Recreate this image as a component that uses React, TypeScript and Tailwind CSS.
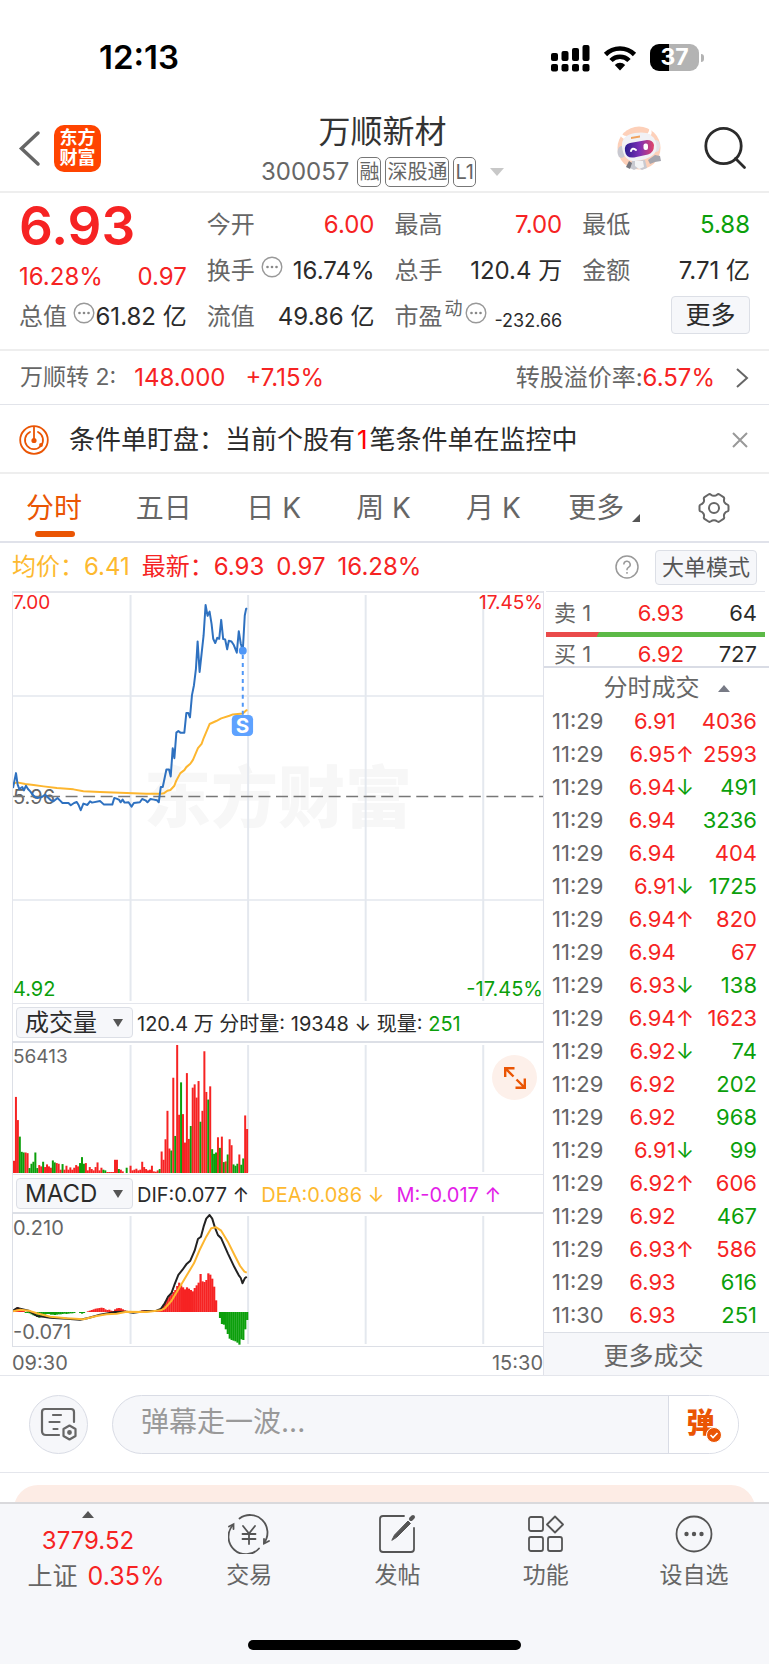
import React from 'react';

const RED = 'text-[#f62323]';
const GREEN = 'text-[#0b9f0b]';

const trades: [string, string, string, string, 'r' | 'g'][] = [
  ['11:29', '6.91', '', '4036', 'r'],
  ['11:29', '6.95', '↑', '2593', 'r'],
  ['11:29', '6.94', '↓', '491', 'g'],
  ['11:29', '6.94', '', '3236', 'g'],
  ['11:29', '6.94', '', '404', 'r'],
  ['11:29', '6.91', '↓', '1725', 'g'],
  ['11:29', '6.94', '↑', '820', 'r'],
  ['11:29', '6.94', '', '67', 'r'],
  ['11:29', '6.93', '↓', '138', 'g'],
  ['11:29', '6.94', '↑', '1623', 'r'],
  ['11:29', '6.92', '↓', '74', 'g'],
  ['11:29', '6.92', '', '202', 'g'],
  ['11:29', '6.92', '', '968', 'g'],
  ['11:29', '6.91', '↓', '99', 'g'],
  ['11:29', '6.92', '↑', '606', 'r'],
  ['11:29', '6.92', '', '467', 'g'],
  ['11:29', '6.93', '↑', '586', 'r'],
  ['11:29', '6.93', '', '616', 'g'],
  ['11:30', '6.93', '', '251', 'g'],
];

// One entry per minute; negative values are drawn green.
const volume = [
  37, 230, 160, -110, -64, -62, 62, 60, -15, -28, -34, -62, -15, 24, 20, -34, 18, 26, 20, 16, -38, -32, 30, 28, 10, -27,
  10, 22, 10, 17, 10, 16, 24, 20, -30, -48, -28, 30, 8, 18, 12, 8, 18, 32, 8, 16, -10, -8, 3, 3, 3, 3, 40, 40, -12, 10,
  5, 0, -16, 0, 22, 8, 10, 13, 8, 10, 34, 18, 12, 8, 10, 22, 5, 4, 8, -12, 65, 40, 102, 188, 74, -68, 288, -112, 387,
  176, -274, 178, 92, 302, 103, -142, 258, 268, 228, 278, -155, 188, 368, 245, -222, 262, -72, -58, -62, 108, -76, 110,
  -33, 35, -56, 102, 84, -26, -22, -28, 56, -25, -44, 174, 133,
];

const macd = [
  6, 10, 14, 8, 5, 4, -3, -3, -4, -7, -10, -12, -15, -17, -15, -10, -8, -6, -6, -8, -8, -9, -8, -7, -7, -6, -5, -6, -5,
  -4, -4, -3, 0, 0, -3, -5, -3, 0, 2, 4, 6, 8, 10, 11, 12, 13, 12, 8, 6, 7, 4, 3, 8, 11, 12, 11, 8, 5, 3, 2, 1, 1, 1, 2,
  2, 3, 5, 5, 4, 3, 3, 3, 3, 3, 4, 5, 12, 22, 32, 42, 48, 52, 60, 66, 78, 88, 80, 74, 68, 74, 70, 66, 62, 72, 80, 88,
  114, 92, 90, 96, 116, 112, 100, 76, 35, 0, -18, -36, -38, -52, -66, -80, -84, -86, -88, -92, -98, -82, -84, -52, -24,
];

const pricePoints =
  '38,625 42,605 47,580 52,615 57,628 66,622 71,632 77,618 83,628 90,635 97,645 105,652 112,655 125,652 135,645 145,655 152,662 160,665 172,655 180,663 187,670 205,670 212,677 222,670 230,667 236,677 242,692 250,672 262,676 270,665 276,669 300,664 312,675 337,675 343,655 350,657 358,661 362,668 368,660 374,669 386,668 395,681 402,670 420,668 427,658 437,662 443,668 452,658 462,660 472,662 477,668 483,622 489,622 500,569 508,569 513,590 519,505 524,535 530,458 536,453 542,458 554,458 560,399 566,399 571,412 577,345 583,315 589,265 594,183 600,275 606,220 612,165 618,73 624,106 630,93 636,130 641,175 647,188 653,172 659,175 665,118 671,176 677,177 683,207 688,181 696,183 703,194 712,217 718,152 724,190 730,211 736,105 740,85 743,83';
const averagePoints =
  '38,612 50,608 75,613 100,616 130,620 170,625 220,629 250,635 300,637 380,640 440,642 483,642 492,641 503,633 512,631 524,618 530,602 542,580 554,571 560,562 572,552 580,540 595,505 606,492 612,475 630,432 650,423 665,415 690,407 700,403 730,400 740,391 744,390';
const difPoints =
  '38,992 50,984 85,992 110,1008 130,1010 150,1013 200,1016 240,1019 265,1014 300,1004 345,996 380,995 400,998 435,994 470,992 483,987 495,970 505,950 515,940 524,915 536,885 548,870 560,853 572,842 585,812 595,777 604,770 612,740 620,716 630,705 638,716 646,742 655,765 665,775 685,820 705,862 718,886 724,894 729,910 736,895 742,890';
const deaPoints =
  '38,994 60,989 85,992 110,1000 150,1010 200,1015 250,1018 290,1008 320,1003 350,1001 380,995 440,996 483,991 495,985 515,963 530,938 560,888 583,850 600,810 620,770 635,745 650,742 665,752 685,785 705,825 722,858 735,875 742,878';

function VerticalGrid({ height }: { height: number }) {
  return (
    <g stroke="#e4e8ee" strokeWidth="2">
      {[118, 236, 354, 472].map((x) => (
        <line key={x} x1={x} x2={x} y1="2" y2={height - 2} />
      ))}
    </g>
  );
}

function Dots() {
  return (
    <svg viewBox="0 0 22 22" className="size-[22px] shrink-0" fill="none">
      <circle cx="11" cy="11" r="9.8" stroke="#999" strokeWidth="1.4" />
      <g fill="#888">
        <circle cx="6.5" cy="11" r="1.3" />
        <circle cx="11" cy="11" r="1.3" />
        <circle cx="15.5" cy="11" r="1.3" />
      </g>
    </svg>
  );
}

function Stat({ label, extra, value, tone = 'text-[#2b2b2b]' }: { label: string; extra?: React.ReactNode; value: string; tone?: string }) {
  return (
    <div className="flex h-[46px] items-center justify-between whitespace-nowrap">
      <dt className="flex items-center gap-1.5 text-[#666]">
        {label}
        {extra}
      </dt>
      <dd className={tone}>{value}</dd>
    </div>
  );
}

function StatusBar() {
  return (
    <div className="flex h-[105px] items-center justify-between pt-[10px] pr-[65px] pl-[99px]">
      <span className="text-[33px] font-semibold text-black">12:13</span>
      <div className="flex items-center gap-[13px]">
        <svg viewBox="0 0 40 28" className="h-7 w-10" fill="#000">
          <rect x="1" y="9" width="7" height="8" rx="2" />
          <rect x="11.500" y="7" width="7" height="10" rx="2" />
          <rect x="22" y="4" width="7" height="13" rx="2" />
          <rect x="32.500" y="1" width="7" height="16" rx="2" />
          <rect x="1" y="20" width="7" height="7.500" rx="2" />
          <rect x="11.500" y="20" width="7" height="7.500" rx="2" />
          <rect x="22" y="20" width="7" height="7.500" rx="2" />
          <rect x="32.500" y="20" width="7" height="7.500" rx="2" />
        </svg>
        <svg viewBox="0 0 34 26" className="h-[26px] w-[34px]" fill="none" stroke="#000" strokeWidth="4.600">
          <path d="M2.500 9.500a20.500 20.500 0 0 1 29 0" />
          <path d="M8 15.500a12.600 12.600 0 0 1 18 0" />
          <path d="M17 25.500l-5.200-5.600a7.500 7.500 0 0 1 10.400 0z" fill="#000" stroke="none" />
        </svg>
        <div className="flex items-center gap-0.5">
          <span className="flex h-[27px] w-[49px] items-center justify-center rounded-[9px] bg-linear-to-r from-black from-38% to-[#b3b3b3] to-38% text-[23px] font-bold text-white">
            37
          </span>
          <span className="h-2 w-[3px] rounded-r bg-[#b3b3b3]" />
        </div>
      </div>
    </div>
  );
}

function Robot() {
  return (
    <svg viewBox="0 0 45 45" className="size-[45px]">
      <circle cx="22" cy="22" r="21.500" fill="#fdd0b9" />
      <path d="M15 35l-2 7 4 2 4-2 4 2 5-2-2-8z" fill="#c9c9d0" />
      <path d="M18 35h8l1 6-5 2-4-3z" fill="#f3f3f5" />
      <path d="M31 34l7-5 5 1 1 5-6 1-5 2z" fill="#a5a5ad" />
      <path d="M12 35l-3 6 4 2 2-6z" fill="#77777f" />
      <path d="M3 5q-1 5 4 8l3-3q-5 0-7-5z" fill="#fff" />
      <path d="M32 1q4 3 2 8l-4-1q3-3 2-7z" fill="#fff" />
      <ellipse cx="4.500" cy="26" rx="4" ry="6" fill="#c8c8d0" />
      <ellipse cx="39" cy="20" rx="4" ry="6" fill="#e2e2e8" />
      <path d="M5 21Q4 9 18 7q17-3 21 9 2 9-3 13-6 5-18 6Q7 36 5 21z" fill="#f1f1f5" />
      <path d="M14 11l9-1.500v2L14 13z" fill="#f0a25e" />
      <path d="M8 25q-1-7 5-8l17-3q6 0 7 5 0 8-6 9.500l-14 3q-8 1-9-6.500z" fill="url(#visor)" />
      <path d="M14 25q1-4 5-1" stroke="#fff" strokeWidth="2" fill="none" strokeLinecap="round" />
      <rect x="26.500" y="17.500" width="4.500" height="6.500" rx="2" fill="#fff" />
      <defs>
        <linearGradient id="visor" x1="0" x2="1">
          <stop stopColor="#2b1c8f" />
          <stop offset="0.500" stopColor="#7b2fb5" />
          <stop offset="1" stopColor="#e0456a" />
        </linearGradient>
      </defs>
    </svg>
  );
}

function Header() {
  return (
    <header className="flex h-[88px] items-center justify-between border-b-2 border-[#eee] pr-[22px] pl-[18px]">
      <div className="flex w-[130px] items-center gap-[13px]">
        <button aria-label="返回">
          <svg viewBox="0 0 23 38" className="h-[38px] w-[23px]" fill="none" stroke="#666" strokeWidth="3.500" strokeLinecap="round">
            <path d="M20 4L3.500 19.500 20 35" />
          </svg>
        </button>
        <a href="#home" className="flex size-[47px] flex-col items-center justify-center rounded-[10px] bg-[#ff4400] text-[18px] leading-[20px] font-bold text-white">
          <span>东方</span>
          <span>财富</span>
        </a>
      </div>
      <div className="flex flex-col items-center pt-1">
        <h1 className="text-[32px] leading-[44px] text-[#333]">万顺新材</h1>
        <div className="flex items-center gap-1 text-[#666]">
          <span className="mr-1 text-[24px]">300057</span>
          {['融', '深股通', 'L1'].map((t) => (
            <span key={t} className="h-[30px] rounded-[5px] border border-[#777] px-px text-[20px] leading-[28px]">
              {t}
            </span>
          ))}
          <svg viewBox="0 0 14 8" className="ml-2.5 h-2 w-3.5" fill="#c8c8c8">
            <path d="M0 0h14L7 8z" />
          </svg>
        </div>
      </div>
      <div className="flex w-[130px] items-center justify-between">
        <button aria-label="智能助手">
          <Robot />
        </button>
        <button aria-label="搜索">
          <svg viewBox="0 0 44 44" className="size-11" fill="none" stroke="#2b2b2b" strokeWidth="2.800">
            <circle cx="20.500" cy="20" r="17.700" />
            <path d="M32.500 32.500l9 9" strokeLinecap="round" />
          </svg>
        </button>
      </div>
    </header>
  );
}

function Quote() {
  return (
    <section className="grid grid-cols-4 gap-5 border-b-2 border-[#eee] px-[19px] pt-[9px] pb-[9px] text-[24px] leading-[30px]">
      <div className={RED}>
        <div className="flex h-[58px] items-start text-[53px] leading-[49px] font-semibold">6.93</div>
        <div className="flex h-[34px] items-center justify-between text-[24px]">
          <span>16.28%</span>
          <span>0.97</span>
        </div>
        <dl className="flex h-[46px] items-center justify-between whitespace-nowrap">
          <dt className="flex items-center gap-1.5 text-[#666]">
            总值
            <span className="-mt-2 -mr-2 w-[18px]">
              <Dots />
            </span>
          </dt>
          <dd className="text-[#2b2b2b]">61.82 亿</dd>
        </dl>
      </div>
      <dl>
        <Stat label="今开" value="6.00" tone={RED} />
        <Stat
          label="换手"
          extra={
            <span className="-mt-2">
              <Dots />
            </span>
          }
          value="16.74%"
        />
        <Stat label="流值" value="49.86 亿" />
      </dl>
      <dl>
        <Stat label="最高" value="7.00" tone={RED} />
        <Stat label="总手" value="120.4 万" />
        <div className="flex h-[46px] items-center justify-between whitespace-nowrap">
          <dt className="flex items-center text-[#666]">
            市盈
            <span className="-mt-4 mr-0.5 ml-0.5 text-[18px]">动</span>
            <span className="-mt-2">
              <Dots />
            </span>
          </dt>
          <dd className="pt-2 text-[18px] text-[#2b2b2b]">-232.66</dd>
        </div>
      </dl>
      <div>
        <dl>
          <Stat label="最低" value="5.88" tone={GREEN} />
          <Stat label="金额" value="7.71 亿" />
        </dl>
        <div className="flex h-[42px] items-center justify-end">
          <button className="h-[38px] w-[79px] rounded-[4px] border border-[#dcdfe6] bg-[#f6f7fa] text-[25px] text-[#2b2b2b]">更多</button>
        </div>
      </div>
    </section>
  );
}

function BondRow() {
  return (
    <a href="#bond" className={`flex h-[54px] items-center border-b border-[#e2e4ea] px-5 text-[24px] ${RED}`}>
      <span className="text-[23px] text-[#666]">万顺转 2:</span>
      <span className="ml-[18px]">148.000</span>
      <span className="ml-5">+7.15%</span>
      <span className="ml-auto text-[#666]">转股溢价率:</span>
      <span>6.57%</span>
      <svg viewBox="0 0 14 22" className="ml-5 h-[22px] w-3.5" fill="none" stroke="#666" strokeWidth="2">
        <path d="M2 2l10 9L2 20" />
      </svg>
    </a>
  );
}

function MonitorRow() {
  return (
    <div className="flex h-[69px] items-center border-b-2 border-[#eee] pt-0.5 pr-[21px] pl-[19px] text-[26px] text-[#2b2b2b]">
      <svg viewBox="0 0 30 30" className="size-[30px]" fill="none" stroke="#ea5504" strokeWidth="1.800" strokeLinecap="round">
        <circle cx="15" cy="15" r="13.800" />
        <path d="M11 7a9 9 0 1 0 8 0" />
        <path d="M15 2v13" />
        <circle cx="15" cy="15.500" r="1.700" fill="#ea5504" />
        <circle cx="22" cy="20" r="1" fill="#ea5504" />
      </svg>
      <p className="ml-5 whitespace-nowrap">
        条件单盯盘：当前个股有<span className="mx-0.5 text-[#f00]">1</span>笔条件单在监控中
      </p>
      <button aria-label="关闭" className="ml-auto">
        <svg viewBox="0 0 16 16" className="size-4" fill="none" stroke="#999" strokeWidth="2">
          <path d="M1 1l14 14M15 1L1 15" />
        </svg>
      </button>
    </div>
  );
}

function Tabs() {
  return (
    <nav className="grid h-[69px] grid-cols-7 border-b-2 border-[#e0e2ea] text-[28px] text-[#666]">
      {['分时', '五日', '日 K', '周 K', '月 K'].map((t, i) => (
        <button key={t} className={`relative pr-0.5 ${i === 0 ? 'text-[#ea5504]' : ''}`}>
          {t}
          {i === 0 && <span className="absolute bottom-1 left-[35px] h-1.5 w-10 rounded-full bg-[#ea5504]" />}
        </button>
      ))}
      <button className="flex items-center justify-center gap-2">
        更多
        <svg viewBox="0 0 8 8" className="mt-5 size-2" fill="#555">
          <path d="M8 0v8H0z" />
        </svg>
      </button>
      <button aria-label="设置" className="flex items-center justify-center">
        <svg viewBox="0 0 32 32" className="size-8" fill="none" stroke="#666" strokeWidth="2" strokeLinejoin="round">
          <path d="M10.500 2.500q1.200-.8 2.500.2 1.200 1.100 3 1.100t3-1.100q1.300-1 2.500-.2l4 2.600q1 .8.600 2.100-.5 2 .6 3.500 1 1.400 2.800 1.900 1 .4 1 1.500v3.800q0 1.100-1 1.500-1.800.5-2.800 1.900-1.100 1.500-.6 3.500.4 1.300-.6 2.100l-4 2.600q-1.200.8-2.500-.2-1.200-1.100-3-1.100t-3 1.100q-1.300 1-2.500.2l-4-2.600q-1-.8-.6-2.100.5-2-.6-3.500-1-1.400-2.800-1.900-1-.4-1-1.500v-3.800q0-1.100 1-1.500 1.800-.5 2.800-1.900 1.100-1.500.6-3.500-.4-1.300.6-2.100z" />
          <circle cx="16" cy="16" r="5" />
        </svg>
      </button>
    </nav>
  );
}

function Legend() {
  return (
    <div className={`flex h-[48px] items-center px-3 text-[24px] whitespace-nowrap ${RED}`}>
      <span className="text-[#fdb92f]">均价：6.41</span>
      <span className="ml-3">最新：6.93</span>
      <span className="ml-3">0.97</span>
      <span className="ml-3">16.28%</span>
      <button aria-label="帮助" className="ml-auto">
        <svg viewBox="0 0 24 24" className="size-6" fill="none" stroke="#999" strokeWidth="1.500">
          <circle cx="12" cy="12" r="11" />
          <path d="M8.800 9.500a3.200 3.200 0 1 1 4.700 2.800q-1.500.9-1.500 2.300v.6M12 17v1.800" />
        </svg>
      </button>
      <button className="ml-4 h-[35px] rounded-[4px] border border-[#dcdfe6] bg-[#f6f7fa] px-1.5 text-[22px] leading-[30px] text-[#555]">大单模式</button>
    </div>
  );
}

function IndicatorSelect({ label, name }: { label: string; name: string }) {
  return (
    <span className="relative flex items-center">
      <select
        aria-label={label}
        className="h-[31px] w-[117px] appearance-none rounded-[4px] border border-[#dcdfe6] bg-[#f6f7fa] pl-2 text-[24px] leading-[28px] text-[#2b2b2b]"
      >
        <option>{name}</option>
      </select>
      <svg viewBox="0 0 10 8" className="pointer-events-none absolute right-2.5 h-2 w-2.5" fill="#555">
        <path d="M0 0h10L5 8z" />
      </svg>
    </span>
  );
}

function Charts() {
  return (
    <div className="min-w-0 flex-1 pl-3">
      <div className="relative h-[412px] border-t-2 border-l border-[#e4e6ec]">
        <span className="absolute top-[168px] right-0 left-0 text-center text-[67px] leading-[74px] font-black text-[#f7f7f7]">东方财富</span>
        <svg viewBox="0 0 532 412" preserveAspectRatio="none" className="absolute inset-0 size-full" fill="none">
          <VerticalGrid height={412} />
          <path d="M0 103.500h532M0 308.500h532" stroke="#e4e8ee" strokeWidth="1.500" />
        </svg>
        <span className={`absolute -top-0.5 left-0 text-[19px] leading-[24px] ${RED}`}>7.00</span>
        <span className={`absolute -top-0.5 right-0 text-[19px] leading-[24px] ${RED}`}>17.45%</span>
        <span className="absolute top-[192px] left-0 text-[20px] leading-[24px] text-[#666]">5.96</span>
        <span className={`absolute bottom-0.5 left-0 text-[20px] leading-[24px] ${GREEN}`}>4.92</span>
        <span className={`absolute right-0 bottom-0.5 text-[20px] leading-[24px] ${GREEN}`}>-17.45%</span>
        <svg viewBox="0 0 532 412" preserveAspectRatio="none" className="absolute inset-0 size-full" fill="none">
          <path d="M0 204.500h532" stroke="#777" strokeWidth="1.500" strokeDasharray="12 5.600" />
          <g transform="scale(.3333) translate(-38 -37)" strokeLinejoin="round">
            <polyline points={averagePoints} stroke="#fdb62f" strokeWidth="6" />
            <polyline points={pricePoints} stroke="#2e71c0" strokeWidth="6" />
            <path d="M730 224v180" stroke="#4f97f7" strokeWidth="6" strokeDasharray="12 12" />
            <circle cx="730" cy="211" r="12" fill="#4f97f7" />
            <rect x="697" y="405" width="64" height="63" rx="13" fill="#5ea2ff" />
            <text x="729" y="459" textAnchor="middle" fontSize="62" fontWeight="700" fill="#fff">
              S
            </text>
          </g>
        </svg>
      </div>
      <div className="flex h-[38px] items-center gap-1 border-t border-l border-[#e4e6ec] pl-[3px] text-[20px] whitespace-nowrap text-[#2b2b2b]">
        <IndicatorSelect label="副图指标一" name="成交量" />
        <span className="pt-0.5">
          120.4 万 分时量: 19348 ↓ 现量: <span className={GREEN}>251</span>
        </span>
      </div>
      <div className="relative h-[133px] border-t-2 border-l border-[#dcdfe6]">
        <svg viewBox="0 0 532 132" preserveAspectRatio="none" className="absolute inset-0 size-full">
          <VerticalGrid height={132} />
          {volume.map((v, i) => (
            <rect key={i} x={i * 1.95} y={131 - Math.abs(v) / 3} width="2" height={Math.abs(v) / 3} fill={v < 0 ? '#0b9f0b' : '#f62323'} />
          ))}
        </svg>
        <span className="absolute top-0.5 left-0 text-[19px] leading-[24px] text-[#666]">56413</span>
        <button aria-label="全屏" className="absolute top-3 right-1.5 flex size-[45px] items-center justify-center rounded-full bg-[#fdf0ea]">
          <svg viewBox="0 0 24 24" className="size-6" fill="none" stroke="#ea5504" strokeWidth="2.400">
            <path d="M2.200 11V2.200H11.500M2.500 2.500l8 8M21.800 12.500v9.300H12.500M21.500 21.500l-8-8" />
          </svg>
        </button>
      </div>
      <div className="flex h-[38px] items-center gap-1 border-t border-l border-[#e4e6ec] pl-[3px] text-[20px] whitespace-nowrap text-[#2b2b2b]">
        <IndicatorSelect label="副图指标二" name="MACD" />
        <span className="pt-0.5">DIF:0.077 ↑</span>
        <span className="ml-2 pt-0.5 text-[#fdb92f]">DEA:0.086 ↓</span>
        <span className="ml-2 pt-0.5 text-[#e31ee8]">M:-0.017 ↑</span>
      </div>
      <div className="relative h-[135px] border-t-2 border-b border-l border-[#dcdfe6]">
        <svg viewBox="0 0 532 132" preserveAspectRatio="none" className="absolute inset-0 size-full" fill="none">
          <VerticalGrid height={132} />
          {macd.map((v, i) => (
            <rect key={i} x={i * 1.95} y={v > 0 ? 98 - v / 3 : 98} width="2.2" height={Math.abs(v) / 3} fill={v < 0 ? '#0b9f0b' : '#f62323'} />
          ))}
          <g transform="scale(.3333) translate(-38 -702)" strokeLinejoin="round" strokeWidth="6">
            <polyline points={difPoints} stroke="#222" />
            <polyline points={deaPoints} stroke="#fdb62f" />
          </g>
        </svg>
        <span className="absolute top-0.5 left-0 text-[20px] leading-[24px] text-[#666]">0.210</span>
        <span className="absolute bottom-0.5 left-0 text-[20px] leading-[24px] text-[#666]">-0.071</span>
      </div>
      <div className="flex h-[28px] items-center justify-between pt-1 text-[20px] leading-[24px] text-[#666]">
        <span>09:30</span>
        <span>15:30</span>
      </div>
    </div>
  );
}

function OrderPanel() {
  return (
    <aside className="flex w-[226px] flex-col border-l border-[#e0e2ea] text-[22px] leading-[26px]">
      <div className="pr-1 pl-0.5">
        <div className="flex h-[41px] items-center border-t border-[#e4e6ec] pt-0.5 pr-2 pl-2 text-[#2b2b2b]">
          <span className="w-[64px] text-[#666]">卖 1</span>
          <span className={`w-[66px] text-right ${RED}`}>6.93</span>
          <span className="ml-auto">64</span>
        </div>
        <div className="h-[5px] bg-linear-115 from-[#ea4a4a] from-24% to-[#5cb947] to-24%" />
        <div className="flex h-[29px] items-center pt-1 pr-2 pl-2 text-[#2b2b2b]">
          <span className="w-[64px] text-[#666]">买 1</span>
          <span className={`w-[66px] text-right ${RED}`}>6.92</span>
          <span className="ml-auto">727</span>
        </div>
      </div>
      <button className="flex h-[38px] items-center justify-center gap-[18px] border-t-2 border-[#d9dce5] pt-1 pl-5 text-[24px] text-[#666]">
        分时成交
        <svg viewBox="0 0 12 7" className="h-[7px] w-3" fill="#777a85">
          <path d="M0 7h12L6 0z" />
        </svg>
      </button>
      <table className="w-full flex-1">
        <tbody>
          {trades.map(([time, price, arrow, vol, tone], i) => (
            <tr key={i} className="h-[33px]">
              <td className="w-[70px] p-0 pl-2 text-[#666]">{time}</td>
              <td className={`p-0 text-right ${RED}`}>{price}</td>
              <td className={`w-[15px] p-0 ${arrow === '↓' ? GREEN : RED}`}>{arrow}</td>
              <td className={`w-[75px] p-0 pr-3 text-right ${tone === 'r' ? RED : GREEN}`}>{vol}</td>
            </tr>
          ))}
        </tbody>
      </table>
      <button className="h-[43px] border-t border-[#dcdfe6] bg-[#f6f7fa] pt-1 pr-1.5 text-[25px] text-[#666]">更多成交</button>
    </aside>
  );
}

function CommentBar() {
  return (
    <div className="flex h-[98px] items-center gap-6 border-t border-b border-[#e4e6ec] pr-[30px] pl-[29px]">
      <button aria-label="弹幕设置" className="flex size-[59px] items-center justify-center rounded-full border border-[#d9dce5] bg-[#f6f7fa]">
        <svg viewBox="0 0 38 34" className="h-[34px] w-[38px]" fill="none" stroke="#666" strokeWidth="2.200" strokeLinecap="round">
          <path d="M34 15V5q0-3-3-3H5Q2 2 2 5v19q0 4 4 4h13M13 8h8M9.500 15h10M13.500 22h4" />
          <path d="M29.500 18.500l6 3.500v7l-6 3.500-6-3.500v-7z" strokeLinejoin="round" />
          <circle cx="29.500" cy="25.500" r="1.300" fill="#666" />
        </svg>
      </button>
      <div className="flex h-[59px] flex-1 overflow-hidden rounded-full border border-[#d9dce5] bg-[#f6f7fa]">
        <input aria-label="弹幕" placeholder="弹幕走一波..." className="min-w-0 flex-1 bg-transparent pb-1 pl-7 text-[28px] outline-none placeholder:text-[#999]" />
        <button aria-label="弹幕开关" className="relative w-[70px] border-l border-[#d9dce5] bg-white pr-1.5 pb-0.5 text-[28px] font-black text-[#ea5504]">
          弹
          <svg viewBox="0 0 16 16" className="absolute right-4 bottom-2.5 size-4">
            <circle cx="8" cy="8" r="7.500" fill="#ea5504" stroke="#fff" />
            <path d="M4.500 8l2.500 2.500L11.500 6" stroke="#fff" strokeWidth="1.600" fill="none" />
          </svg>
        </button>
      </div>
    </div>
  );
}

const actions: { label: string; icon: React.ReactNode }[] = [
  {
    label: '交易',
    icon: (
      <>
        <path d="M11.500 4.500A17.500 17.500 0 0 1 36 29M31 34.500A17.500 17.500 0 0 1 5 11" />
        <path d="M1 12.500l4.500-2.300V15M41 27l-5 2.500V25" />
        <path d="M15 12l6 7.500L27 12M14.500 20h13M14.500 25h13M21 20v10" />
      </>
    ),
  },
  {
    label: '发帖',
    icon: (
      <>
        <path d="M28 2H7Q4 2 4 5v30q0 3 3 3h28q3 0 3-3V14" />
        <path d="M16 26l2.500-5L32 7l2.500 2.500L21 23z" fill="#555" strokeWidth="1" />
        <path d="M35 5l2-2" strokeWidth="4" />
      </>
    ),
  },
  {
    label: '功能',
    icon: (
      <>
        <rect x="4" y="3" width="14" height="14" rx="2" />
        <rect x="4" y="23" width="14" height="14" rx="2" />
        <rect x="23" y="23" width="14" height="14" rx="2" />
        <path d="M30 2.500l8 8-8 8-8-8z" strokeLinejoin="round" />
      </>
    ),
  },
  {
    label: '设自选',
    icon: (
      <>
        <circle cx="21" cy="20" r="17.500" />
        <g fill="#555" stroke="none">
          <circle cx="13.500" cy="20" r="2.200" />
          <circle cx="21" cy="20" r="2.200" />
          <circle cx="28.500" cy="20" r="2.200" />
        </g>
      </>
    ),
  },
];

function BottomBar() {
  return (
    <footer className="border-t-2 border-[#d9d9dc] bg-[#f6f7fa] text-[#666]">
      <div className="grid h-[134px] grid-cols-[176px_1fr_1fr_1fr_1fr]">
        <button className="flex flex-col items-center pt-[7px]">
          <svg viewBox="0 0 12 7" className="h-[7px] w-3" fill="#555">
            <path d="M0 7h12L6 0z" />
          </svg>
          <span className={`mt-1.5 text-[24px] leading-[34px] ${RED}`}>3779.52</span>
          <span className="flex gap-2.5 pl-4 text-[25px] leading-[36px]">
            上证 <span className={RED}>0.35%</span>
          </span>
        </button>
        {actions.map((a) => (
          <button key={a.label} className="flex flex-col items-center gap-1 pt-2.5 pr-0.5">
            <svg viewBox="0 0 42 40" className="h-10 w-[42px]" fill="none" stroke="#555" strokeWidth="1.800" strokeLinecap="round">
              {a.icon}
            </svg>
            <span className="text-[23px] leading-[34px]">{a.label}</span>
          </button>
        ))}
      </div>
      <div className="flex h-[26px] justify-center">
        <span className="mt-0.5 h-2.5 w-[273px] rounded-full bg-black" />
      </div>
    </footer>
  );
}

export default function App() {
  return (
    <main className="bg-white font-[Inter,'Noto_Sans_CJK_SC',sans-serif]">
      <StatusBar />
      <Header />
      <Quote />
      <BondRow />
      <MonitorRow />
      <Tabs />
      <Legend />
      <div className="flex">
        <Charts />
        <OrderPanel />
      </div>
      <CommentBar />
      <div className="h-[29px] overflow-hidden px-3.5 pt-3">
        <div className="h-12 rounded-[26px] bg-[#fdece5]" />
      </div>
      <BottomBar />
    </main>
  );
}
